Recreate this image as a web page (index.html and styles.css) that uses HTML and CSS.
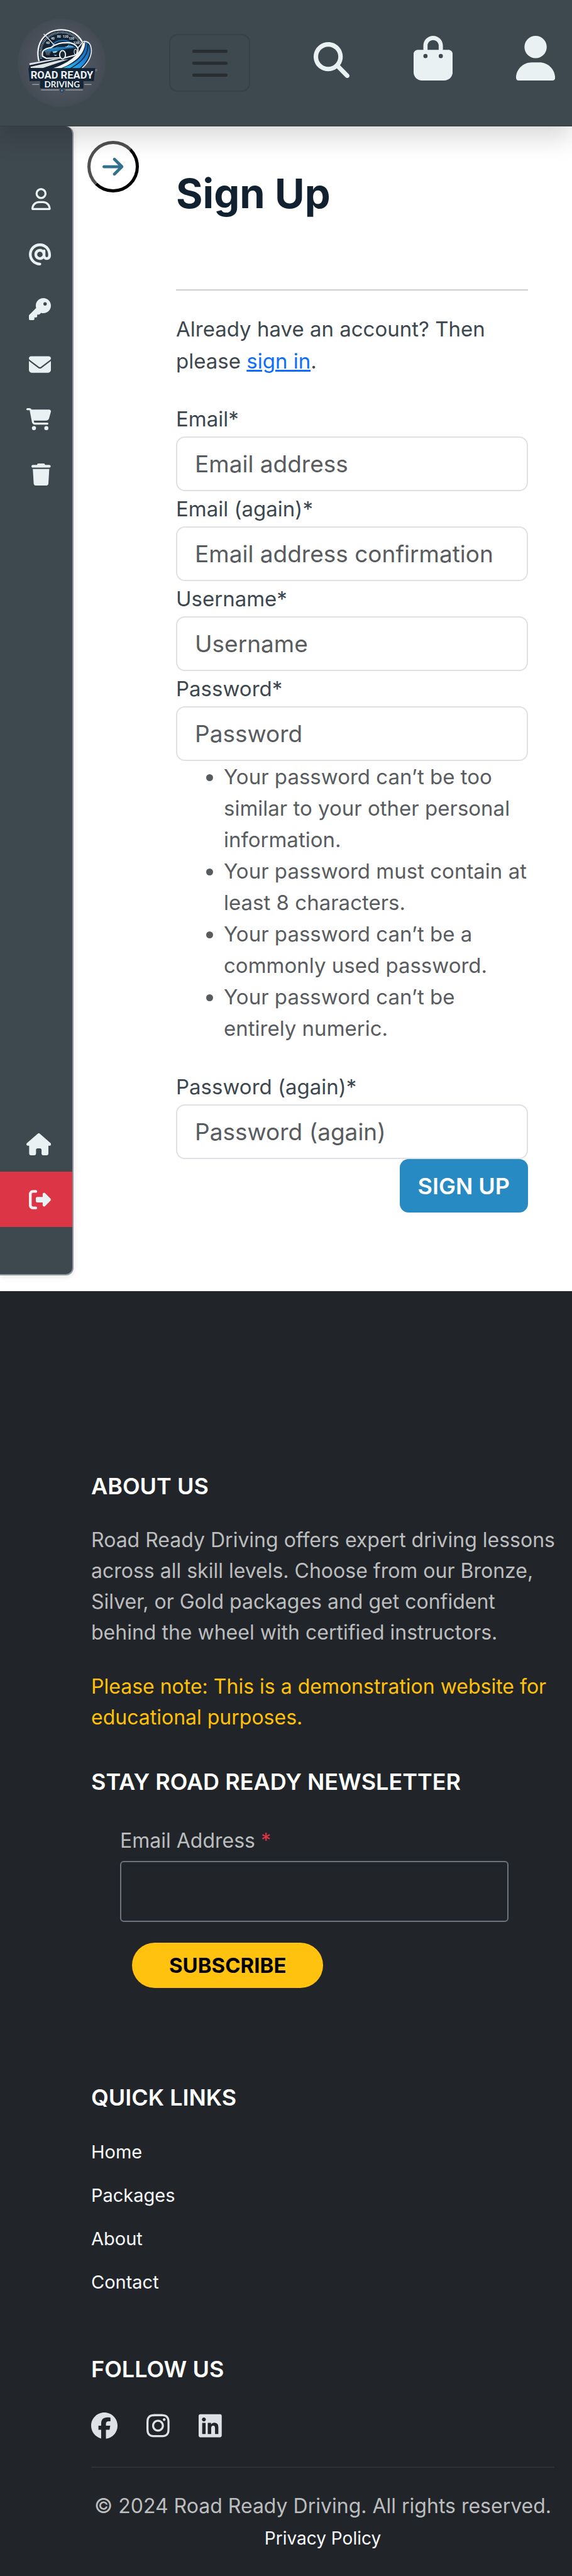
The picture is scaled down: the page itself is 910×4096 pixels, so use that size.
FILE: index.html
```html
<!DOCTYPE html>
<html lang="en">
<head>
<meta charset="utf-8">
<meta name="viewport" content="width=device-width, initial-scale=1">
<title>Sign Up | Road Ready Driving</title>
<link rel="stylesheet" href="styles.css">
</head>
<body>
<header class="topbar">
  <a class="brand" href="#" aria-label="Road Ready Driving">
    <svg class="logo" viewBox="108 120 540 540" aria-hidden="true">
      <defs>
        <radialGradient id="disc"><stop offset="0" stop-color="#5b6069"/><stop offset=".7" stop-color="#4c525b"/><stop offset="1" stop-color="#434b54"/></radialGradient>
        <linearGradient id="road" x1="0" y1="1" x2="1" y2="0"><stop offset="0" stop-color="#2fc4f5"/><stop offset=".5" stop-color="#1d86dc"/><stop offset="1" stop-color="#1a5d9c"/></linearGradient>
        <linearGradient id="body" x1="0" y1="0" x2="1" y2="1"><stop offset="0" stop-color="#35b3ea"/><stop offset=".6" stop-color="#1668a4"/><stop offset="1" stop-color="#0f2b46"/></linearGradient>
      </defs>
      <circle cx="378" cy="390" r="270" fill="url(#disc)"/>
      <path d="M240 382C225 330 234 276 262 240C290 204 330 187 378 187C440 187 492 222 512 280L470 340L250 390Z" fill="#142434" stroke="#f4f7f8" stroke-width="9"/>
      <path d="M252 362C242 300 262 256 296 230C346 190 430 194 476 244L494 272" fill="none" stroke="#d6dde0" stroke-width="14" stroke-dasharray="3 6"/>
      <path d="M318 290C334 256 366 252 384 252C418 252 436 264 444 280" fill="none" stroke="#1f6fb4" stroke-width="7"/>
      <g class="dial"><text x="282" y="275">40</text><text x="312" y="248">40</text><text x="350" y="234">80</text><text x="385" y="234">120</text><text x="421" y="248">120</text><text x="450" y="275">120</text></g>
      <path d="M268 212L333 280" stroke="#f4f7f8" stroke-width="5"/>
      <path d="M178 394L320 362C400 352 470 318 498 266C516 246 554 256 561 296C566 346 540 390 506 424H178Z" fill="#142434"/>
      <path d="M180 392L330 366L366 366L180 404ZM186 414L366 374L420 368L262 422H190Z" fill="#dfe3e4"/>
      <path d="M320 424C410 396 490 344 506 270L522 262C524 344 440 400 370 424Z" fill="#f4f7f8"/>
      <path d="M380 424C470 392 530 340 524 264C548 276 556 300 550 330C540 374 510 404 488 424Z" fill="url(#road)"/>
      <path d="M432 424C500 386 546 340 538 276" fill="none" stroke="#142434" stroke-width="6"/>
      <path d="M502 424C544 386 564 344 560 304C556 272 538 258 516 258C500 260 496 286 478 296" fill="none" stroke="#dce3e8" stroke-width="7"/>
      <path d="M262 350C254 318 268 304 314 296C346 270 376 266 414 266C450 266 468 282 478 300C480 324 474 338 456 344L400 358L284 362Z" fill="#101e2c" stroke="#f4f7f8" stroke-width="8"/>
      <path d="M268 316C290 304 320 298 340 296C372 276 400 272 432 280L472 298L420 302L366 312L330 334L318 318L268 318Z" fill="url(#body)"/>
      <path d="M348 294C370 276 400 272 428 278L404 292Z" fill="#132436"/>
      <path d="M410 292L424 278M400 292L450 290" stroke="#cfe0e8" stroke-width="3"/>
      <path d="M272 318H316L306 342H284Z" fill="#6f7c86"/>
      <path d="M276 320L286 340M288 320L294 340M300 320L302 340M312 320L306 340" stroke="#18283a" stroke-width="4"/>
      <path d="M324 322L352 318L344 326H326ZM328 342H350L342 348Z" fill="#e8f0f2"/>
      <ellipse cx="384" cy="340" rx="18" ry="26" fill="#1a2a38" stroke="#f4f7f8" stroke-width="7"/>
      <ellipse cx="463" cy="322" rx="8" ry="16" fill="#1a2a38" stroke="#f4f7f8" stroke-width="4"/>
      <path d="M174 422H584L576 502H512V546H246V502H182Z" fill="#132536"/>
      <text class="logo-name" x="380" y="485" text-anchor="middle">ROAD READY</text>
      <text class="logo-sub" x="381" y="539" text-anchor="middle">DRIVING</text>
      <path d="M198 522H240M518 522H561M252 556H362M402 556H508" stroke="#b9c0c4" stroke-width="4"/>
      <circle cx="591" cy="435" r="5" fill="none" stroke="#8b939a" stroke-width="3"/>
      <circle cx="380" cy="560" r="9" fill="#4e86ab" stroke="#22394d" stroke-width="4"/>
    </svg>
  </a>
  <button class="menu-toggle" type="button" aria-label="Toggle navigation"><span></span><span></span><span></span></button>
  <a class="top-icon top-icon-search" href="#" aria-label="Search"><svg viewBox="0 0 512 512"><path d="M416 208c0 45.900-14.900 88.300-40 122.700L502.600 457.400c12.500 12.500 12.500 32.800 0 45.300s-32.800 12.500-45.300 0L330.700 376c-34.400 25.200-76.800 40-122.700 40C93.100 416 0 322.900 0 208S93.100 0 208 0S416 93.100 416 208zM208 352a144 144 0 1 0 0-288 144 144 0 1 0 0 288z"/></svg></a>
  <a class="top-icon" href="#" aria-label="Shopping bag"><svg viewBox="0 0 448 512"><path d="M160 112c0-35.300 28.700-64 64-64s64 28.700 64 64v48H160V112zm-48 48H48c-26.500 0-48 21.500-48 48V416c0 53 43 96 96 96H352c53 0 96-43 96-96V208c0-26.500-21.500-48-48-48H336V112C336 50.100 285.900 0 224 0S112 50.100 112 112v48zm24 48a24 24 0 1 1 0 48 24 24 0 1 1 0-48zm152 24a24 24 0 1 1 48 0 24 24 0 1 1 -48 0z"/></svg></a>
  <a class="top-icon" href="#" aria-label="Account"><svg viewBox="0 0 448 512"><path d="M224 256A128 128 0 1 0 224 0a128 128 0 1 0 0 256zm-45.700 48C79.800 304 0 383.800 0 482.300C0 498.700 13.300 512 29.700 512H418.300c16.400 0 29.700-13.300 29.700-29.700C448 383.800 368.200 304 269.700 304H178.300z"/></svg></a>
</header>

<div class="shell">
  <nav class="sidebar" aria-label="Account">
    <ul class="side-main">
      <li><a href="#" aria-label="Profile"><svg viewBox="0 0 448 512"><path d="M304 128a80 80 0 1 0 -160 0 80 80 0 1 0 160 0zM96 128a128 128 0 1 1 256 0A128 128 0 1 1 96 128zM49.300 464H398.700c-8.900-63.300-63.300-112-129-112H178.300c-65.700 0-120.100 48.700-129 112zM0 482.300C0 383.800 79.800 304 178.300 304h91.400C368.200 304 448 383.800 448 482.300c0 16.400-13.300 29.700-29.700 29.700H29.700C13.300 512 0 498.700 0 482.300z"/></svg></a></li>
      <li><a href="#" aria-label="Email addresses"><svg viewBox="0 0 512 512"><path d="M256 64C150 64 64 150 64 256s86 192 192 192c17.700 0 32 14.300 32 32s-14.300 32-32 32C114.600 512 0 397.400 0 256S114.600 0 256 0S512 114.600 512 256v32c0 53-43 96-96 96c-29.300 0-55.600-13.200-73.200-33.900C320 371.100 289.500 384 256 384c-70.700 0-128-57.300-128-128s57.300-128 128-128c27.900 0 53.700 8.900 74.700 24.100c5.700-5 13.100-8.100 21.300-8.100c17.700 0 32 14.300 32 32v80 32c0 17.700 14.300 32 32 32s32-14.300 32-32V256c0-106-86-192-192-192zm64 192a64 64 0 1 0 -128 0 64 64 0 1 0 128 0z"/></svg></a></li>
      <li><a href="#" aria-label="Change password"><svg viewBox="0 0 512 512"><path d="M336 352c97.200 0 176-78.800 176-176S433.200 0 336 0S160 78.800 160 176c0 18.700 2.900 36.800 8.300 53.700L7 391c-4.500 4.500-7 10.600-7 17v80c0 13.300 10.700 24 24 24h80c13.300 0 24-10.700 24-24V448h40c13.300 0 24-10.700 24-24V384h40c6.400 0 12.500-2.500 17-7l33.300-33.300c16.900 5.400 35 8.300 53.700 8.300zM376 96a40 40 0 1 1 0 80 40 40 0 1 1 0-80z"/></svg></a></li>
      <li><a href="#" aria-label="Messages"><svg viewBox="0 0 512 512"><path d="M48 64C21.500 64 0 85.500 0 112c0 15.100 7.100 29.300 19.200 38.400L236.800 313.600c11.400 8.500 27 8.500 38.400 0L492.800 150.400c12.100-9.100 19.200-23.300 19.200-38.400c0-26.500-21.500-48-48-48H48zM0 176V384c0 35.300 28.700 64 64 64H448c35.300 0 64-28.700 64-64V176L294.400 339.200c-22.800 17.100-54 17.100-76.800 0L0 176z"/></svg></a></li>
      <li><a href="#" aria-label="Orders"><svg viewBox="0 0 576 512"><path d="M0 24C0 10.700 10.700 0 24 0H69.500c22 0 41.500 12.800 50.600 32h411c26.300 0 45.500 25 38.600 50.400l-41 152.300c-8.500 31.400-37 53.300-69.500 53.300H170.700l5.400 28.500c2.200 11.300 12.100 19.500 23.600 19.500H488c13.300 0 24 10.700 24 24s-10.700 24-24 24H199.700c-34.600 0-64.300-24.600-70.700-58.500L77.400 54.500c-.7-3.800-4-6.500-7.900-6.500H24C10.700 48 0 37.300 0 24zM128 464a48 48 0 1 1 96 0 48 48 0 1 1 -96 0zm336-48a48 48 0 1 1 0 96 48 48 0 1 1 0-96z"/></svg></a></li>
      <li><a href="#" aria-label="Delete account"><svg viewBox="0 0 448 512"><path d="M135.200 17.700L128 32H32C14.300 32 0 46.300 0 64S14.300 96 32 96H416c17.700 0 32-14.300 32-32s-14.300-32-32-32H320l-7.200-14.300C307.400 6.800 296.300 0 284.200 0H163.800c-12.100 0-23.200 6.800-28.600 17.700zM416 128H32L53.200 467c1.600 25.300 22.600 45 47.900 45H346.900c25.300 0 46.300-19.700 47.900-45L416 128z"/></svg></a></li>
    </ul>
    <ul class="side-end">
      <li><a href="#" aria-label="Home"><svg viewBox="0 0 576 512"><path d="M575.800 255.500c0 18-15 32.100-32 32.100h-32l.7 160.200c0 2.700-.2 5.400-.5 8.100V472c0 22.100-17.900 40-40 40H456c-1.100 0-2.200 0-3.300-.1c-1.400 .1-2.800 .1-4.200 .1H416 392c-22.100 0-40-17.900-40-40V448 384c0-17.700-14.300-32-32-32H256c-17.700 0-32 14.300-32 32v64 24c0 22.100-17.900 40-40 40H160 128.100c-1.500 0-3-.1-4.500-.2c-1.200 .1-2.400 .2-3.600 .2H104c-22.100 0-40-17.900-40-40V360c0-.9 0-1.900 .1-2.800V287.600H32c-18 0-32-14-32-32.100c0-9 3-17 10-24L266.400 8c7-7 15-8 22-8s15 2 21 7L564.800 231.500c8 7 12 15 11 24z"/></svg></a></li>
      <li class="side-logout"><a href="#" aria-label="Log out"><svg viewBox="0 0 512 512"><path d="M377.900 105.900L500.700 228.700c7.200 7.200 11.300 17.100 11.300 27.300s-4.100 20.100-11.300 27.300L377.900 406.100c-6.400 6.400-15 9.900-24 9.900c-18.700 0-33.900-15.200-33.900-33.900l0-62.100-128 0c-17.700 0-32-14.300-32-32l0-64c0-17.700 14.300-32 32-32l128 0 0-62.100c0-18.700 15.200-33.900 33.900-33.900c9 0 17.600 3.600 24 9.900zM160 96L96 96c-17.700 0-32 14.300-32 32l0 256c0 17.700 14.300 32 32 32l64 0c17.700 0 32 14.300 32 32s-14.300 32-32 32l-64 0c-53 0-96-43-96-96L0 128C0 75 43 32 96 32l64 0c17.700 0 32 14.300 32 32s-14.300 32-32 32z"/></svg></a></li>
    </ul>
  </nav>

  <button class="side-open" type="button" aria-label="Open sidebar"><svg viewBox="0 0 448 512"><path d="M438.600 278.600c12.500-12.500 12.500-32.800 0-45.300l-160-160c-12.500-12.500-32.800-12.500-45.300 0s-12.500 32.800 0 45.300L338.800 224 32 224c-17.700 0-32 14.300-32 32s14.300 32 32 32l306.700 0L233.400 393.400c-12.500 12.500-12.500 32.800 0 45.300s32.800 12.500 45.300 0l160-160z"/></svg></button>

  <main class="signup">
    <h1>Sign Up</h1>
    <hr>
    <p class="intro">Already have an account? Then please <a href="#">sign in</a>.</p>
    <form class="signup-form">
      <label for="email">Email*</label>
      <input id="email" type="email" placeholder="Email address">
      <label for="email2">Email (again)*</label>
      <input id="email2" type="email" placeholder="Email address confirmation">
      <label for="username">Username*</label>
      <input id="username" type="text" placeholder="Username">
      <label for="password1">Password*</label>
      <input id="password1" type="password" placeholder="Password" aria-describedby="rules">
      <ul class="rules" id="rules">
        <li>Your password can’t be too similar to your other personal information.</li>
        <li>Your password must contain at least 8 characters.</li>
        <li>Your password can’t be a commonly used password.</li>
        <li>Your password can’t be entirely numeric.</li>
      </ul>
      <label for="password2">Password (again)*</label>
      <input id="password2" type="password" placeholder="Password (again)">
      <button class="submit" type="submit">SIGN UP</button>
    </form>
  </main>
</div>

<footer class="footer">
  <section class="about">
    <h2>ABOUT US</h2>
    <p>Road Ready Driving offers expert driving lessons across all skill levels. Choose from our Bronze, Silver, or Gold packages and get confident behind the wheel with certified instructors.</p>
    <p class="note">Please note: This is a demonstration website for educational purposes.</p>
  </section>
  <section class="newsletter">
    <h2>STAY ROAD READY NEWSLETTER</h2>
    <form>
      <label for="news-email">Email Address <span>*</span></label>
      <input id="news-email" type="email">
      <button type="submit">SUBSCRIBE</button>
    </form>
  </section>
  <section class="links">
    <h2>QUICK LINKS</h2>
    <ul>
      <li><a href="#">Home</a></li>
      <li><a href="#">Packages</a></li>
      <li><a href="#">About</a></li>
      <li><a href="#">Contact</a></li>
    </ul>
  </section>
  <section class="follow">
    <h2>FOLLOW US</h2>
    <div class="social">
      <a href="#" aria-label="Facebook"><svg viewBox="0 0 512 512"><path d="M512 256C512 114.600 397.400 0 256 0S0 114.600 0 256C0 376 82.700 476.800 194.200 504.500V334.200H141.400V256h52.800V222.300c0-87.100 39.400-127.500 125-127.500c16.200 0 44.200 3.200 55.700 6.400V172c-6-.6-16.500-1-29.600-1c-42 0-58.200 15.900-58.200 57.200V256h83.600l-14.400 78.200H287V510.100C413.800 494.800 512 386.900 512 256h0z"/></svg></a>
      <a href="#" aria-label="Instagram"><svg viewBox="0 0 448 512"><path d="M224.100 141c-63.600 0-114.900 51.300-114.900 114.900s51.300 114.900 114.900 114.900S339 319.500 339 255.900 287.700 141 224.100 141zm0 189.600c-41.100 0-74.700-33.500-74.700-74.700s33.500-74.700 74.700-74.700 74.700 33.500 74.700 74.700-33.600 74.700-74.700 74.700zm146.400-194.300c0 14.900-12 26.800-26.800 26.800-14.900 0-26.800-12-26.800-26.800s12-26.800 26.800-26.800 26.800 12 26.800 26.800zm76.100 27.200c-1.700-35.900-9.900-67.700-36.200-93.900-26.200-26.200-58-34.400-93.900-36.200-37-2.100-147.900-2.100-184.900 0-35.800 1.700-67.600 9.900-93.900 36.100s-34.400 58-36.200 93.900c-2.100 37-2.100 147.900 0 184.900 1.700 35.900 9.900 67.700 36.200 93.900s58 34.400 93.900 36.200c37 2.100 147.900 2.100 184.900 0 35.900-1.700 67.700-9.900 93.900-36.200 26.200-26.200 34.400-58 36.200-93.900 2.100-37 2.100-147.800 0-184.800zM398.800 388c-7.800 19.600-22.900 34.700-42.600 42.600-29.500 11.700-99.500 9-132.100 9s-102.700 2.600-132.100-9c-19.600-7.800-34.700-22.900-42.600-42.600-11.700-29.500-9-99.500-9-132.100s-2.600-102.700 9-132.100c7.800-19.600 22.900-34.700 42.600-42.600 29.500-11.700 99.500-9 132.100-9s102.700-2.600 132.100 9c19.600 7.800 34.700 22.900 42.600 42.600 11.700 29.500 9 99.500 9 132.100s2.700 102.700-9 132.100z"/></svg></a>
      <a href="#" aria-label="LinkedIn"><svg viewBox="0 0 448 512"><path d="M416 32H31.900C14.300 32 0 46.500 0 64.300v383.400C0 465.500 14.300 480 31.900 480H416c17.600 0 32-14.500 32-32.300V64.300c0-17.800-14.400-32.300-32-32.300zM135.400 416H69V202.200h66.500V416zm-33.200-243c-21.300 0-38.500-17.300-38.500-38.500S80.900 96 102.200 96c21.200 0 38.500 17.300 38.500 38.500 0 21.300-17.200 38.500-38.500 38.500zm282.100 243h-66.400V312c0-24.800-.5-56.700-34.500-56.700-34.600 0-39.900 27-39.900 54.900V416h-66.400V202.200h63.700v29.200h.9c8.900-16.800 30.600-34.500 62.200-34.500 66.500 0 78.900 43.800 78.900 100.900V416z"/></svg></a>
    </div>
  </section>
  <div class="legal">
    <p>© 2024 Road Ready Driving. All rights reserved.</p>
    <a href="#">Privacy Policy</a>
  </div>
</footer>
</body>
</html>
```
FILE: styles.css
```css
* { box-sizing: border-box; }
body {
  margin: 0;
  font-family: Inter, Roboto, sans-serif;
  font-size: 33px;
  color: #3d474f;
  background: #fff;
}
h1, h2, p, ul, hr { margin: 0; padding: 0; }
svg { display: block; fill: currentColor; }
button, input { font-family: inherit; }

/* Top bar */
.topbar {
  position: relative;
  z-index: 2;
  display: flex;
  align-items: center;
  justify-content: space-between;
  padding: 30px 27px 30px 28px;
  background: #3e484f;
  border-bottom: 1px solid #343a40;
  box-shadow: 0 19px 37px rgba(0, 0, 0, .15);
}
.logo { width: 140px; height: 140px; }
.dial { fill: #dfe5e8; font: 700 20px Roboto, sans-serif; }
.logo-name { fill: #eef1f2; font: 700 64px Roboto, sans-serif; }
.logo-sub { fill: #eef1f2; font: 700 52px Lato, sans-serif; }
.menu-toggle {
  display: flex;
  flex-direction: column;
  align-items: center;
  justify-content: center;
  gap: 14px;
  width: 129px;
  height: 92px;
  padding: 0;
  background: none;
  border: 2px solid #373f47;
  border-radius: 14px;
}
.menu-toggle span { width: 56px; height: 5px; border-radius: 2px; background: #2a2e31; }
.top-icon { color: #e9f1f3; margin-bottom: 16px; }
.top-icon svg { height: 71px; }
.top-icon-search { margin-bottom: 10px; }
.top-icon-search svg { height: 57px; }

/* Page body */
.shell { display: flex; align-items: flex-start; }
.sidebar {
  display: flex;
  flex-direction: column;
  justify-content: space-between;
  align-self: stretch;
  flex: none;
  width: 117px;
  margin-bottom: 25px;
  padding: 72px 0 75px;
  background: #3e484f;
  border: solid #8f999f;
  border-width: 0 2px 2px 0;
  border-radius: 0 12px 12px 0;
  box-shadow: 0 2px 8px rgba(0, 0, 0, .1);
}
.sidebar ul { display: flex; flex-direction: column; list-style: none; }
.side-main { height: 525px; }
.side-end { height: 176px; }
.sidebar li { flex: 1; display: flex; }
.sidebar a {
  flex: 1;
  display: flex;
  align-items: center;
  justify-content: flex-end;
  padding-right: 34px;
  color: #e9f1f3;
}
.sidebar svg { height: 35px; }
.side-logout { background: #dc3545; }
.side-open {
  display: flex;
  align-items: center;
  justify-content: center;
  flex: none;
  width: 82px;
  height: 82px;
  margin: 23px 59px 0 22px;
  padding: 0;
  color: #31708f;
  background: none;
  border: 5px solid;
  border-color: #505050 #000 #000 #505050;
  border-radius: 50%;
}
.side-open svg { height: 38px; }

/* Sign-up form */
.signup { flex: 1; min-width: 0; padding: 67px 70px 125px 0; }
h1 { font-size: 65px; line-height: 80px; font-weight: 700; color: #12212f; }
hr { margin: 112px 0 36px; border: 0; border-top: 2px solid #cfd1d3; }
.intro { line-height: 51px; margin-bottom: 38px; }
.intro a { color: #0d6efd; }
.signup-form { display: flex; flex-direction: column; }
.signup-form label { line-height: 56px; }
.signup-form input {
  height: 87px;
  padding: 0 28px;
  font-size: 37px;
  color: #3d474f;
  background: #fff;
  border: 2px solid #dee2e6;
  border-radius: 14px;
}
.signup-form input::placeholder { color: #595c5f; opacity: 1; }
.rules { padding-left: 76px; margin-bottom: 40px; line-height: 50px; color: #595c5f; }
.submit {
  align-self: flex-end;
  height: 85px;
  padding: 0 29px;
  font-size: 36px;
  font-weight: 600;
  color: #fff;
  background: #288ac2;
  border: 0;
  border-radius: 14px;
}

/* Footer */
.footer { padding: 288px 24px 38px 145px; background: #212529; color: #bcbdbe; }
h2 { font-size: 36px; line-height: 44px; font-weight: 600; color: #fff; }
.about p { margin-top: 39px; font-size: 32px; line-height: 49px; }
.about .note { margin-top: 37px; color: #ffc107; }
.newsletter { margin-top: 56px; }
.newsletter form {
  display: flex;
  flex-direction: column;
  align-items: flex-start;
  padding: 47px 77px 0 46px;
}
.newsletter label { font-size: 32px; line-height: 50px; }
.newsletter label span { color: #dc3545; }
.newsletter input {
  width: 100%;
  height: 97px;
  margin: 7px 0 33px;
  padding: 0 28px;
  font-size: 33px;
  color: #fff;
  background: transparent;
  border: 2px solid #6c757d;
  border-radius: 6px;
}
.newsletter button {
  height: 72px;
  margin-left: 19px;
  padding: 0 59px;
  font-size: 33px;
  font-weight: 700;
  color: #000;
  background: #ffc20e;
  border: 0;
  border-radius: 36px;
}
.links { margin-top: 152px; }
.links ul { margin-top: 30px; list-style: none; }
.links li { line-height: 69px; font-size: 29px; }
.links a, .legal a { color: #f8f9fa; text-decoration: none; }
.follow { margin-top: 82px; }
.social { display: flex; gap: 46px; margin-top: 47px; }
.social a { color: #dee2e6; }
.social svg { height: 42px; }
.legal {
  margin: 44px 4px 0 0;
  padding-top: 36px;
  border-top: 2px solid #2f3337;
  text-align: center;
  font-size: 32px;
  line-height: 50px;
}
.legal a { font-size: 28px; }
```
